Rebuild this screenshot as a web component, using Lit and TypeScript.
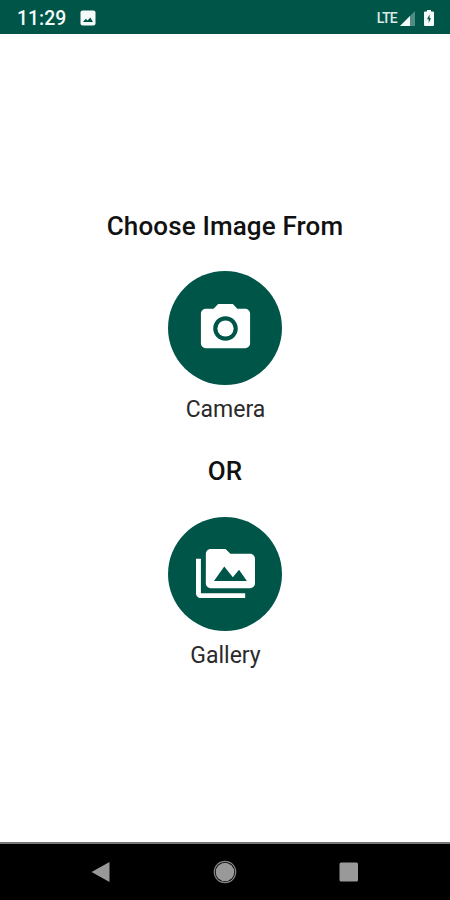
import { LitElement, html, css, svg } from "lit";
import { customElement } from "lit/decorators.js";

const cameraIcon = svg`<circle cx="12" cy="12" r="3.3"/><path d="M9 2 7.17 4H4c-1.1 0-2 .9-2 2v12c0 1.1.9 2 2 2h16c1.1 0 2-.9 2-2V6c0-1.1-.9-2-2-2h-3.170L15 2H9zm3 15c-2.760 0-5-2.240-5-5s2.240-5 5-5 5 2.240 5 5-2.240 5-5 5z"/>`;
const galleryIcon = svg`<path d="M2 6H0v5h.01L0 20c0 1.1.9 2 2 2h18v-2H2V6zm20-2h-8l-2-2H6c-1.1 0-1.990.9-1.990 2L4 16c0 1.1.9 2 2 2h16c1.1 0 2-.9 2-2V6c0-1.1-.9-2-2-2zM7.300 15l4.200-5.800 3.500 4.310 2.500-3.010L20.700 15H7.300z"/>`;

@customElement("app-root")
export class AppRoot extends LitElement {
  static styles = css`
    :host {
      display: flex;
      flex-direction: column;
      width: 450px;
      height: 900px;
      background: #fff;
      font-family: Roboto, sans-serif;
      color: #111;
      overflow: hidden;
    }
    svg { display: block; flex: none; }
    .status {
      flex: none;
      box-sizing: border-box;
      height: 34px;
      padding: 2px 16px 0 17px;
      display: flex;
      align-items: center;
      background: #005549;
      color: #f4fbf9;
    }
    .time { width: 63px; padding-top: 2px; font-size: 19.4px; font-weight: 500; line-height: 32px; white-space: nowrap; }
    .lte { margin-left: auto; font-size: 14px; font-weight: 500; letter-spacing: -0.7px; margin-right: 3px; color: #dcebe8; }
    .battery { margin-left: 9px; }
    main {
      flex: 1;
      display: flex;
      flex-direction: column;
      align-items: center;
      padding-top: 176px;
    }
    h1, h2 { margin: 0; font-size: 26px; line-height: 32px; font-weight: 500; white-space: nowrap; }
    h1 { letter-spacing: 0.14px; }
    h2 { margin-top: 30px; }
    .choice {
      border: 0;
      padding: 0;
      background: none;
      font: inherit;
      color: #2a2a2a;
      display: flex;
      flex-direction: column;
      align-items: center;
      margin-top: 29px;
    }
    .disc {
      width: 114px;
      height: 114px;
      border-radius: 50%;
      background: #005549;
      display: grid;
      place-items: center;
      fill: #fff;
    }
    .label { margin-top: 10px; padding-left: 1px; font-size: 23px; line-height: 30px; }
    h2 + .choice { margin-top: 29.5px; }
    h2 + .choice .label { margin-top: 10.5px; }
    nav {
      flex: none;
      box-sizing: border-box;
      height: 58px;
      border-top: 2px solid #777;
      background: #000;
      display: grid;
      grid-template-columns: 22px 24px 20px;
      justify-content: space-between;
      align-items: center;
      padding: 0 91px 0 90px;
    }
    .home { margin-left: -1px; }
  `;

  render() {
    return html`
      <header class="status">
        <span class="time">11:29</span>
        <svg width="16" height="16" viewBox="0 0 16 16">
          <rect x=".5" y=".5" width="15" height="15" rx="2" fill="#f4fbf9"/>
          <path d="M3 12 5.800 8.800 7.600 10.500 10.300 7.500 13 12Z" fill="#005549"/>
        </svg>
        <span class="lte">LTE</span>
        <svg width="15" height="15" viewBox="0 0 15 15">
          <path d="M15 0V15H0Z" fill="#4f8c83"/>
          <path d="M10 5V15H0Z" fill="#f4fbf9"/>
        </svg>
        <svg class="battery" width="10" height="16" viewBox="0 0 10 16">
          <path d="M3 0H7V1.500H9Q10 1.500 10 2.500V15Q10 16 9 16H1Q0 16 0 15V2.500Q0 1.500 1 1.500H3Z" fill="#f4fbf9"/>
          <path d="M5.600 4.500 3 9.300H4.700V13L7 8.300H5.600Z" fill="#005549"/>
        </svg>
      </header>
      <main>
        <h1>Choose Image From</h1>
        <button class="choice">
          <span class="disc"><svg width="59" height="59" viewBox="0 0 24 24">${cameraIcon}</svg></span>
          <span class="label">Camera</span>
        </button>
        <h2>OR</h2>
        <button class="choice">
          <span class="disc"><svg width="59" height="59" viewBox="0 0 24 24">${galleryIcon}</svg></span>
          <span class="label">Gallery</span>
        </button>
      </main>
      <nav>
        <svg width="22" height="22" viewBox="0 0 22 22"><path d="M19.500 1V21L1.500 11Z" fill="#999"/></svg>
        <svg class="home" width="24" height="24" viewBox="0 0 24 24">
          <circle cx="12" cy="12" r="10.700" fill="none" stroke="#858585" stroke-width="1.200"/>
          <circle cx="12" cy="12" r="9.300" fill="#999"/>
        </svg>
        <svg width="20" height="20" viewBox="0 0 20 20"><rect x=".5" y=".5" width="18.500" height="19" rx="1.500" fill="#999"/></svg>
      </nav>
    `;
  }
}
